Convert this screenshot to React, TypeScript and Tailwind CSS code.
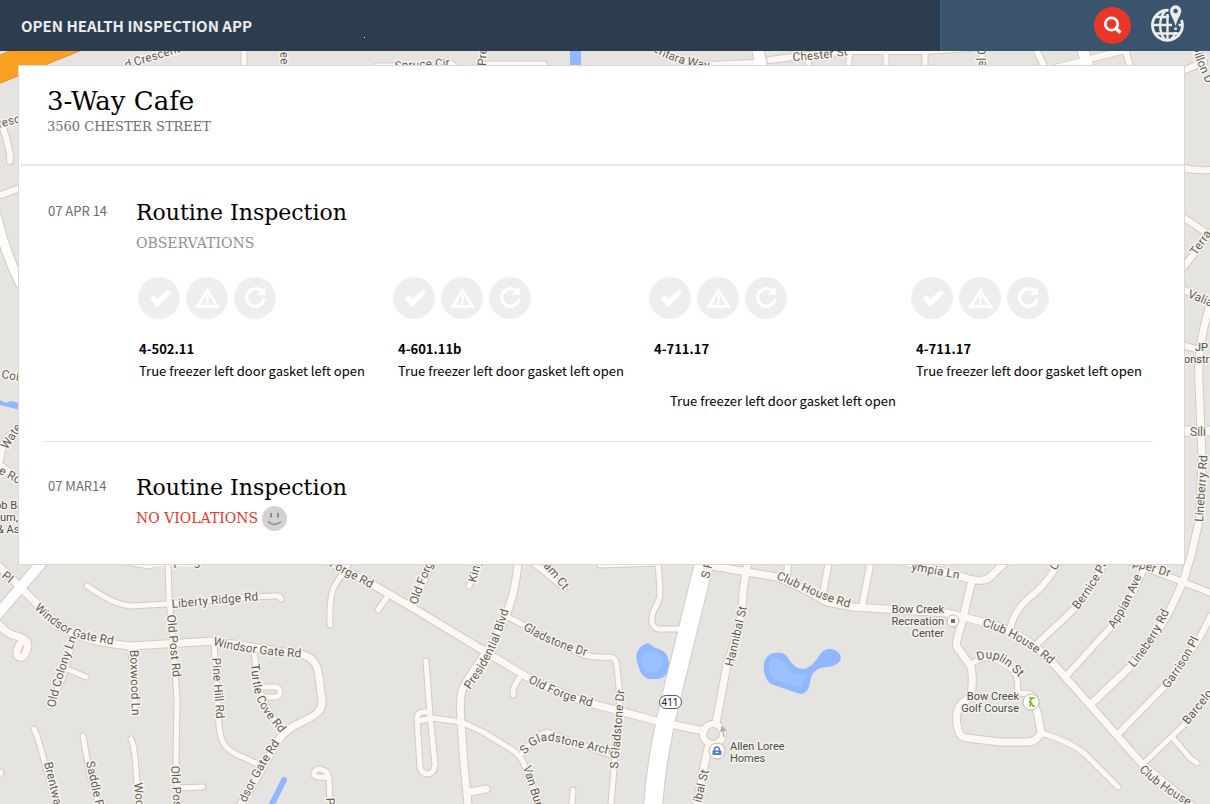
import { useId } from "react";

type Road = { d: string; w?: number; white?: boolean };

const roads: Road[] = [
  { d: "M0 567 L35 602 C48 616 60 627 75 634 S118 645 131 646 L215 641 C245 646 275 651 300 654 C313 657 318 664 319 678 L322 700 C323 712 314 716 300 723 C281 731 275 745 266 762 L241 804" },
  { d: "M0 625 C6 634 14 636 20 637 Q30 641 27 649 Q23 662 17 655 Q16 651 20 644" },
  { d: "M74 638 L62 680 L49 706 M67 669 L86 677", w: 5 },
  { d: "M131 648 L135 708", w: 5 },
  { d: "M87 586 C103 596 114 604 130 606 L168 604 L255 597 L272 596 Q280 595 281 599", w: 5 },
  { d: "M168 560 L169 600 L173 640 L177 700 L176 760 L178 804 M178 788 L203 787", w: 5 },
  { d: "M214 643 L219 725 C220 742 225 749 238 755 L260 765", w: 5 },
  { d: "M254 650 L257 680 Q262 705 284 732 M262 687 L275 687 A5 5 0 0 1 275 697 L265 697", w: 5 },
  { d: "M34 729 Q38 736 46 768 L57 804", w: 5 },
  { d: "M83 736 L90 775 L98 804", w: 5 },
  { d: "M131 739 Q135 745 137 785 L138 804", w: 5 },
  { d: "M0 775 L1 772", w: 5 },
  { d: "M126 562 L150 566", w: 5 },
  { d: "M322 558 L370 583 L413 608 L527 677 C555 690 575 700 597 705 L660 722 L704 731" },
  { d: "M350 562 L335 585 Q329 595 330 625", w: 5 },
  { d: "M387 597 L378 610", w: 5 },
  { d: "M413 606 L434 560 M469 586 L479 560", w: 5 },
  { d: "M518 560 Q517 585 508 610 C498 640 475 665 463 688 Q459 698 461 722 L464 765 L468 804 M470 792 L486 789" },
  { d: "M530 560 L564 588", w: 5 },
  { d: "M508 617 C530 629 560 645 584 655 Q598 658 610 657 Q616 657 617 667 L620 698 L611 804", w: 5 },
  { d: "M520 677 Q512 688 513 695", w: 5 },
  { d: "M426 661 L430 715 L435 765 Q434 774 427 774 Q421 773 420 767 L417 718 Q417 712 424 712 L430 712 M418 721 L432 718 L461 722 L483 732 L511 749 Q524 757 528 776 L540 804", w: 5 },
  { d: "M522 754 Q532 737 547 732 L611 755", w: 5 },
  { d: "M330 804 L329 778 Q328 770 319 769 Q313 770 314 775 Q317 778 327 777", w: 5 },
  { d: "M573 790 L572 804", w: 5 },
  { d: "M600 565 L658 563", w: 5 },
  { d: "M658 560 L660 592 Q660 600 655 608 Q647 625 658 629 L682 629", w: 5 },
  { d: "M712 566 L747 572 L777 577 Q798 585 827 602 L853 607 L947 613 L983 622 Q1022 630 1053 663 L1090 705 L1143 765 L1190 804" },
  { d: "M748 560 L743 592 Q743 620 727 665 L716 723 M708 748 L703 772 L697 804" },
  { d: "M788 560 L787 576 M829 560 L822 600 M871 560 L862 607", w: 6 },
  { d: "M905 562 L963 577 Q986 585 993 574 L1008 560 M972 580 L963 618 L957 640 Q955 647 960 651 L970 665 Q974 674 971 697 L962 703 Q955 710 957 724 Q958 737 967 738 L1000 742 L1028 742 Q1036 742 1041 733 L1038 715 L1034 704" },
  { d: "M970 665 Q984 655 993 659 Q1010 664 1017 677 L1018 693 L1030 694 Q1036 696 1036 704", w: 5 },
  { d: "M1041 733 Q1075 743 1088 757 L1118 787", w: 5 },
  { d: "M1060 560 Q1048 582 1035 593 Q1012 610 1010 632", w: 6 },
  { d: "M1038 643 L1073 610 Q1096 583 1105 560", w: 6 },
  { d: "M1067 675 L1110 628 Q1136 592 1147 560", w: 6 },
  { d: "M1090 705 L1130 667 Q1160 630 1170 610 L1183 582 L1191 556 L1200 517 L1202 457 L1199 383 Q1197 345 1210 305" },
  { d: "M1120 732 L1163 688 Q1192 655 1211 616", w: 6 },
  { d: "M1145 762 L1187 722 L1211 693 M1173 738 L1190 758 L1197 763", w: 5 },
  { d: "M1128 561 L1183 582 L1211 593", w: 6 },
  { d: "M244 48 L244 70 M284 48 L284 70 M377 66 L400 66 M440 60 Q452 60 455 68 M487 64 L544 64", w: 5 },
  { d: "M656 50 Q675 62 710 65 L754 63 M770 60 L800 56 L850 51 L886 51 L925 51 L970 48", w: 6 },
  { d: "M808 56 L809 70 M850 51 L848 70 M886 51 L886 70 M925 51 L925 70 M982 48 L982 70", w: 5 },
  { d: "M1034 45 L1046 70 M1055 68 L1125 50 M1125 48 L1131 70 M1180 72 L1204 62", w: 6 },
  { d: "M1183 168 Q1195 171 1211 170 M1183 217 L1211 236 M1183 268 L1211 232 M1183 289 L1211 305 M1183 345 L1199 350", w: 6 },
  { d: "M1183 431 L1211 431", w: 9 },
  { d: "M3 128 Q11 152 10 161 M-2 196 L20 188 M0 460 Q4 432 20 430 M0 465 L20 480", w: 6 },
  { d: "M-4 616 L44 560", w: 10, white: true },
  { d: "M-4 215 Q6 255 20 283", w: 9, white: true },
  { d: "M757 46 L763 72 M1082 46 L1089 72", w: 11, white: true },
  { d: "M706 556 L670 702 Q656 760 653 808", w: 18, white: true },
];

const labels: { text: string; d: string }[] = [
  { text: "Pl", d: "M1 577 L20 592" },
  { text: "Windsor Gate Rd", d: "M34 608 Q58 633 82 639 L125 647" },
  { text: "Windsor Gate Rd", d: "M213 645 Q250 655 310 658" },
  { text: "Liberty Ridge Rd", d: "M172 608 L262 600" },
  { text: "Old Post Rd", d: "M167 615 L174 690" },
  { text: "Old Pos", d: "M171 766 L174 815" },
  { text: "Old Colony Ln", d: "M55 708 Q62 675 78 634" },
  { text: "Boxwood Ln", d: "M130 650 L132 720" },
  { text: "Pine Hill Rd", d: "M212 658 L217 730" },
  { text: "Turtle Cove Rd", d: "M251 664 C254 702 257 705 284 738" },
  { text: "dsor Gate Rd", d: "M246 803 Q258 775 282 740" },
  { text: "Brentwat", d: "M44 763 L59 825" },
  { text: "Saddle R", d: "M86 762 L101 830" },
  { text: "Woo", d: "M134 783 L137 815" },
  { text: "Olan Spring", d: "M139 565 L210 565" },
  { text: "Forge Rd", d: "M329 566 Q347 576 378 592" },
  { text: "Old Forge", d: "M417 605 Q425 580 440 550" },
  { text: "King", d: "M476 583 L484 550" },
  { text: "Presidential Blvd", d: "M470 690 Q500 650 511 600" },
  { text: "ham Ct", d: "M538 562 Q550 572 566 594" },
  { text: "Gladstone Dr", d: "M523 629 Q547 646 596 659" },
  { text: "Old Forge Rd", d: "M528 682 Q555 698 600 709" },
  { text: "S Gladstone Arch", d: "M525 755 C534 744 541 738 556 742 L616 756" },
  { text: "S Gladstone Dr", d: "M618 769 L625 685" },
  { text: "Van Bur", d: "M523 767 L538 815" },
  { text: "P", d: "M326 798 L327 815" },
  { text: "S F", d: "M709 579 L716 550" },
  { text: "Hannibal St", d: "M733 667 L749 598" },
  { text: "ibal St", d: "M701 803 L711 762" },
  { text: "Club House Rd", d: "M776 579 C798 587 820 602 860 610" },
  { text: "Club House Rd", d: "M982 626 Q1022 638 1055 669" },
  { text: "Club House", d: "M1139 770 Q1158 791 1200 812" },
  { text: "ympia Ln", d: "M911 570 L975 582" },
  { text: "C", d: "M1056 571 L1066 553" },
  { text: "Bernice Pl", d: "M1078 610 Q1098 585 1111 555" },
  { text: "Appian Ave", d: "M1114 629 Q1134 600 1146 563" },
  { text: "Lineberry Rd", d: "M1134 668 Q1158 640 1174 600" },
  { text: "Lineberry Rd", d: "M1203 522 L1208 448" },
  { text: "Garrison Pl", d: "M1168 689 Q1190 660 1205 626" },
  { text: "Barcelo", d: "M1188 725 L1216 690" },
  { text: "pper Dr", d: "M1132 566 L1180 580" },
  { text: "Duplin St", d: "M978 661 C992 654 1006 662 1021 680" },
  { text: "d Crescent", d: "M126 69 L190 49" },
  { text: "ree", d: "M280 48 L281 72" },
  { text: "Spruce Cir", d: "M395 70 L460 66" },
  { text: "Pre", d: "M486 66 L487 40" },
  { text: "entara Way", d: "M653 51 Q675 66 722 71" },
  { text: "Chester St", d: "M793 61 Q820 60 860 53" },
  { text: "el C", d: "M986 67 L986 40" },
  { text: "Dillon D", d: "M1192 46 Q1199 73 1214 96" },
  { text: "Terra", d: "M1196 256 L1216 228" },
  { text: "Valia", d: "M1187 297 L1216 309" },
  { text: "resc", d: "M-1 128 L25 121" },
  { text: "Col", d: "M1 378 L25 382" },
  { text: "Wate", d: "M7 450 L26 421" },
  { text: "e Ro", d: "M-2 473 L26 488" },
];

function RoadLabel({ text, d }: { text: string; d: string }) {
  const id = useId();
  return (
    <>
      <path id={id} d={d} fill="none" stroke="none" />
      <text>
        <textPath href={`#${id}`}>{text}</textPath>
      </text>
    </>
  );
}

function StreetMap() {
  return (
    <svg
      className="absolute inset-0 h-full w-full"
      viewBox="0 0 1210 804"
      preserveAspectRatio="xMidYMin slice"
      aria-hidden="true"
    >
      <rect width="1210" height="804" fill="#e5e4e0" />
      <path d="M0 400 L6 403 L10 401 L20 403 V410 L0 405 Z M570 48 H581 V70 H570 Z" fill="#91b8ff" />
      <path d="M284 780 L270 808" stroke="#91b8ff" strokeWidth="6" strokeLinecap="round" />
      <path
        d="M648 643 C653 646 654 648 659 649 C667 652 669 658 669 666 C668 674 664 679 657 679 L648 679 C642 676 640 672 638 665 C634 655 637 646 648 643 Z"
        fill="#91b8ff"
      />
      <path
        d="M773 653 C783 652 785 653 789 659 C793 666 798 669 804 669 C811 667 814 663 819 656 C823 648 832 647 838 652 C844 658 840 665 829 667 C818 667 813 671 811 678 C809 689 807 694 800 694 L771 684 C763 679 759 657 773 653 Z"
        fill="#91b8ff"
      />
      <circle cx="652" cy="662" r="11" fill="#9cc0ff" />
      <path d="M773 658 C784 658 785 667 795 673 L807 676 L801 688 L775 680 C768 676 766 661 773 658 Z" fill="#9cc0ff" />
      <g fill="none" stroke="#d3ccbf" strokeLinecap="round" strokeLinejoin="round">
        {roads.map((r) => (
          <path key={r.d} d={r.d} strokeWidth={(r.w ?? 7) + 2} />
        ))}
        <circle cx="713" cy="734" r="10" strokeWidth="8" />
      </g>
      <g fill="none" strokeLinecap="round" strokeLinejoin="round">
        {roads.map((r) => (
          <path key={r.d} d={r.d} stroke={r.white ? "#ffffff" : "#fdf8f5"} strokeWidth={r.w ?? 7} />
        ))}
        <circle cx="713" cy="734" r="10" stroke="#fdf8f5" strokeWidth="6" />
      </g>
      <path d="M724 737 L723 731 M721 731 L722 727 L725 730 Z" fill="#b5aea6" stroke="#b5aea6" strokeWidth="1.500" />
      <path d="M-2 56 L12 50 L82 50 L-2 84 Z" fill="#f9a020" stroke="#df9130" />
      <g
        className="font-['Roboto',sans-serif] text-[12px]"
        fill="#625d4f"
        stroke="#f7f4f0"
        strokeWidth="3"
        strokeLinejoin="round"
        paintOrder="stroke"
      >
        {labels.map((l) => (
          <RoadLabel key={l.text + l.d} {...l} />
        ))}
        <text x="1190" y="436">Sili</text>
      </g>
      <g
        className="font-['Roboto',sans-serif] text-[11px]"
        fill="#4f4b45"
        stroke="#f4f2ee"
        strokeWidth="3"
        strokeLinejoin="round"
        paintOrder="stroke"
      >
        <text x="730" y="750">Allen Loree</text>
        <text x="730" y="762">Homes</text>
        <g textAnchor="end">
          <text x="944" y="613">Bow Creek</text>
          <text x="944" y="625">Recreation</text>
          <text x="944" y="637">Center</text>
          <text x="1019" y="700">Bow Creek</text>
          <text x="1019" y="712">Golf Course</text>
        </g>
        <text x="1195" y="351">JP</text>
        <text x="1184" y="363">onstr</text>
        <text x="-5" y="509">ob Ba</text>
        <text x="0" y="521">um,</text>
        <text x="-3" y="533">&amp; As</text>
      </g>
      <rect x="659.5" y="695.5" width="22" height="13" rx="6.5" fill="#fff" stroke="#5d5953" />
      <text x="670" y="706" textAnchor="middle" fill="#222" className="font-['Roboto',sans-serif] text-[10px]">
        411
      </text>
      <g fill="#fff" stroke="#c2bab0">
        <circle cx="717" cy="751" r="8" />
        <circle cx="953" cy="621" r="6" />
        <circle cx="1031" cy="702" r="8" />
      </g>
      <rect x="951" y="619" width="4" height="4" fill="#77705f" />
      <path d="M712.500 750.500 H721.500 V755 H712.500 Z" fill="#4d7fd0" />
      <path d="M714.500 751 V749.500 A2.500 2.500 0 0 1 719.500 749.500 V751" fill="none" stroke="#4d7fd0" strokeWidth="1.500" />
      <path d="M715.500 752.500 H718.500" stroke="#fff" />
      <path
        d="M1029 698 H1035 M1032 698.500 L1029.500 702 L1031 704 L1029.500 706.500 M1031 702 L1033 706 H1035"
        fill="none"
        stroke="#7ab51d"
        strokeWidth="1.500"
      />
    </svg>
  );
}

function GlobePin() {
  return (
    <svg className="h-[38px] w-9" viewBox="0 0 36 38" fill="none" stroke="#ececec" aria-hidden="true">
      <path d="M18.500 5.300 A15 15 0 1 0 31.500 15" strokeWidth="2.800" />
      <g strokeWidth="2.400">
        <path d="M3 20 H22 M28.500 20 H33 M6 12 H19 M5 28.500 H30" />
        <path d="M15 6 C8.500 14 8.500 27 15 35 M25.500 27 C24.500 31 22.500 33.500 20 35.500 M17.500 9 V35" />
      </g>
      <path
        d="M25.600 0.500 A5.400 5.400 0 0 0 20.200 6 C20.200 10 24.500 14.500 25.600 20.500 C26.700 14.500 31 10 31 6 A5.400 5.400 0 0 0 25.600 0.500 Z M25.600 3.400 A2.500 2.500 0 1 1 25.600 8.400 A2.500 2.500 0 1 1 25.600 3.400 Z"
        fill="#ececec"
        fillRule="evenodd"
        strokeWidth="0.500"
      />
      <path d="M25.600 22.500 V25" strokeWidth="2.500" />
    </svg>
  );
}

function StatusIcons() {
  return (
    <div className="flex gap-[6px]">
      <svg className="size-[42px]" viewBox="0 0 42 42" role="img" aria-label="Corrected">
        <circle cx="21" cy="21" r="21" fill="#eee" />
        <path d="M11.700 21.700 L15.600 18 L19.500 21.800 L30 12.800 L33.300 16 L19 30 Z" fill="#fff" />
      </svg>
      <svg className="size-[42px]" viewBox="0 0 42 42" role="img" aria-label="Critical">
        <circle cx="21" cy="21" r="21" fill="#eee" />
        <path d="M21.500 13.300 L11.500 29.500 H31.500 Z" fill="none" stroke="#fff" strokeWidth="2.800" strokeLinejoin="miter" />
        <path d="M19.700 18 H23.300 L22.300 24 H20.700 Z M20.300 25 H22.700 V27.500 H20.300 Z" fill="#fff" />
      </svg>
      <svg className="size-[42px]" viewBox="0 0 42 42" role="img" aria-label="Repeat">
        <circle cx="21" cy="21" r="21" fill="#eee" />
        <path d="M28 14.500 A8.800 8.800 0 1 0 30.300 21.500" fill="none" stroke="#fff" strokeWidth="3.200" />
        <path d="M31 9.800 V18 H22.800 Z" fill="#fff" />
      </svg>
    </div>
  );
}

const observations = [
  { code: "4-502.11", inset: "pl-px", note: "mt-0.5" },
  { code: "4-601.11b", inset: "pl-[5px]", note: "mt-0.5" },
  { code: "4-711.17", inset: "pl-[5px]", note: "mt-8 pl-4" },
  { code: "4-711.17", inset: "pl-[5px]", note: "mt-0.5" },
];

export default function App() {
  return (
    <div className="relative flex min-h-screen flex-col overflow-hidden bg-[#e5e4e0] font-['Noto_Sans_CJK_SC',sans-serif] text-black">
      <StreetMap />

      <header className="relative flex h-[51px] items-stretch bg-[#2d3d50]">
        <div className="flex flex-1 items-center pl-[21px]">
          <h1 className="text-[15px] leading-6 font-bold whitespace-nowrap text-[#ececec]">OPEN HEALTH INSPECTION APP</h1>
          <span className="mt-6 ml-28 size-px bg-white" />
        </div>
        <div className="flex w-[270px] items-center justify-end gap-[19px] border-l border-[#3f5f86] bg-[#3b546d] pr-6">
          <button type="button" aria-label="Search" className="flex size-[37px] items-center justify-center rounded-full bg-[#e93626]">
            <svg className="size-5" viewBox="0 0 20 20" fill="none" stroke="#fff" aria-hidden="true">
              <circle cx="8.500" cy="8" r="6.200" strokeWidth="2.800" />
              <path d="M12.800 12.300 L17.500 16.800" strokeWidth="3.500" />
            </svg>
          </button>
          <button type="button" aria-label="Show on map" className="-mt-1">
            <GlobePin />
          </button>
        </div>
      </header>

      <main className="relative mt-[15px] mr-[26px] mb-10 ml-[19px] bg-white ring-1 ring-[#dcd8cf]">
        <div className="ml-0.5 border-b-2 border-[#e6e6e6] px-[26px] pt-[17px] pb-[29px] font-['DejaVu_Serif',serif]">
          <h2 className="text-[26px] leading-9">3-Way Cafe</h2>
          <p className="text-[13px] leading-4 text-[#6d6d6d]">3560 CHESTER STREET</p>
        </div>

        <section className="flex pt-[31px] pb-[30px] pl-[29px]">
          <time dateTime="2014-04-07" className="w-[88px] shrink-0 text-[13px] leading-7 text-[#6d6d6d]">
            07 APR 14
          </time>
          <div className="flex-1 font-['DejaVu_Serif',serif]">
            <h3 className="text-[22px] leading-8">Routine Inspection</h3>
            <p className="flex h-7 items-center text-[14px] text-[#919191]">OBSERVATIONS</p>
            <ul className="mt-5 grid grid-cols-[255fr_256fr_262fr_273fr] pl-0.5 font-['Noto_Sans_CJK_SC',sans-serif]">
              {observations.map((o, i) => (
                <li key={i}>
                  <StatusIcons />
                  <div className={o.inset}>
                    <h4 className="mt-5 text-[13px] leading-5 font-bold">{o.code}</h4>
                    <p className={`text-[13px] leading-5 whitespace-nowrap ${o.note}`}>True freezer left door gasket left open</p>
                  </div>
                </li>
              ))}
            </ul>
          </div>
        </section>

        <hr className="mr-[31px] ml-6 border-t border-[#e4e4e4]" />

        <section className="flex pt-[30px] pb-8 pl-[29px]">
          <time dateTime="2014-03-07" className="w-[88px] shrink-0 text-[13px] leading-7 text-[#6d6d6d]">
            07 MAR14
          </time>
          <div className="flex-1 font-['DejaVu_Serif',serif]">
            <h3 className="text-[22px] leading-8">Routine Inspection</h3>
            <p className="flex h-7 items-center gap-1 text-[14px] text-[#e93626]">
              NO VIOLATIONS
              <svg className="size-[25px]" viewBox="0 0 25 25" aria-hidden="true">
                <circle cx="12.500" cy="12.500" r="12.500" fill="#d2d2d2" />
                <path d="M9 7 V11.500 M16 7 V11.500" stroke="#8b8b8b" strokeWidth="2" />
                <path d="M6 15.500 Q12.500 21.500 19 15.500" fill="none" stroke="#8b8b8b" strokeWidth="1.500" />
              </svg>
            </p>
          </div>
        </section>
      </main>
    </div>
  );
}
